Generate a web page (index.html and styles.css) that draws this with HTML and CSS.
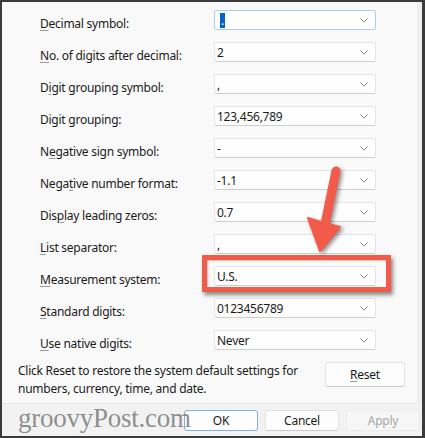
FILE: index.html
```html
<!DOCTYPE html>
<html>
<head>
<meta charset="utf-8">
<link rel="stylesheet" href="styles.css">
</head>
<body>
<div class="window">
  <div class="main">
    <div class="form">
      <label><u>D</u>ecimal symbol:</label>
      <div class="combo focus"><span class="sel">.</span><svg class="chev" viewBox="0 0 8 5"><polyline points="0.5,0.5 4,4 7.5,0.5"/></svg></div>
      <label><u>N</u>o. of digits after decimal:</label>
      <div class="combo"><span>2</span><svg class="chev" viewBox="0 0 8 5"><polyline points="0.5,0.5 4,4 7.5,0.5"/></svg></div>
      <label>D<u>i</u>git grouping symbol:</label>
      <div class="combo"><span>,</span><svg class="chev" viewBox="0 0 8 5"><polyline points="0.5,0.5 4,4 7.5,0.5"/></svg></div>
      <label>Digit grouping:</label>
      <div class="combo"><span>123,456,789</span><svg class="chev" viewBox="0 0 8 5"><polyline points="0.5,0.5 4,4 7.5,0.5"/></svg></div>
      <label>N<u>e</u>gative sign symbol:</label>
      <div class="combo"><span>-</span><svg class="chev" viewBox="0 0 8 5"><polyline points="0.5,0.5 4,4 7.5,0.5"/></svg></div>
      <label>Nega<u>t</u>ive number format:</label>
      <div class="combo"><span>-1.1</span><svg class="chev" viewBox="0 0 8 5"><polyline points="0.5,0.5 4,4 7.5,0.5"/></svg></div>
      <label>Dis<u>p</u>lay leading zeros:</label>
      <div class="combo"><span>0.7</span><svg class="chev" viewBox="0 0 8 5"><polyline points="0.5,0.5 4,4 7.5,0.5"/></svg></div>
      <label><u>L</u>ist separator:</label>
      <div class="combo"><span>,</span><svg class="chev" viewBox="0 0 8 5"><polyline points="0.5,0.5 4,4 7.5,0.5"/></svg></div>
      <label><u>M</u>easurement system:</label>
      <div class="combo"><span>U.S.</span><svg class="chev" viewBox="0 0 8 5"><polyline points="0.5,0.5 4,4 7.5,0.5"/></svg></div>
      <label><u>S</u>tandard digits:</label>
      <div class="combo"><span>0123456789</span><svg class="chev" viewBox="0 0 8 5"><polyline points="0.5,0.5 4,4 7.5,0.5"/></svg></div>
      <label><u>U</u>se native digits:</label>
      <div class="combo"><span>Never</span><svg class="chev" viewBox="0 0 8 5"><polyline points="0.5,0.5 4,4 7.5,0.5"/></svg></div>
    </div>
    <div class="reset-row">
      <p>Click Reset to restore the system default settings for numbers, currency, time, and date.</p>
      <button class="btn reset"><u>R</u>eset</button>
    </div>
  </div>
  <div class="footer">
    <button class="btn ok">OK</button>
    <button class="btn">Cancel</button>
    <button class="btn disabled">Apply</button>
  </div>
  <div class="watermark">groovyPost.com</div>
  <div class="highlight"></div>
  <svg class="arrow" viewBox="0 0 425 438">
    <line x1="336" y1="171" x2="325" y2="224"/>
    <polygon points="308,218 324,223 340,227 320,251"/>
  </svg>
</div>
</body>
</html>
```
FILE: styles.css
```css
* { box-sizing: border-box; }
html, body { margin: 0; padding: 0; }
body {
  width: 425px;
  height: 438px;
  overflow: hidden;
  font-family: "Noto Sans", "Open Sans", sans-serif;
  font-size: 12px;
  letter-spacing: -0.25px;
  color: #1b1b1b;
}
.window {
  position: relative;
  width: 425px;
  height: 438px;
  border: 2px solid #3b3b3b;
  border-right-width: 3px;
  display: flex;
  flex-direction: column;
  background: #f9f9f9;
}
.main {
  flex: 1;
  border-right: 5px solid #eeeeee;
  display: flex;
  flex-direction: column;
}
.form {
  display: grid;
  grid-template-columns: 174px 162px;
  grid-auto-rows: 20px;
  row-gap: 12px;
  padding: 8px 0 0 38px;
}
label {
  display: flex;
  align-items: center;
  padding-top: 6px;
  white-space: nowrap;
}
u {
  text-decoration-color: #9a9a9a;
  text-underline-offset: 2px;
}
.combo {
  display: flex;
  align-items: center;
  justify-content: space-between;
  background: #fefefe;
  border: 1px solid #e6e6e6;
  border-bottom-color: #cfcfcf;
  border-radius: 2px;
  padding: 2px 7px 0 2px;
  line-height: 16px;
  white-space: nowrap;
}
.combo .chev { margin-top: -2px; }
.combo.focus {
  border-color: #a9cff0;
  background: #ffffff;
}
.sel {
  display: inline-block;
  background: #0063d2;
  color: #fff;
  padding: 0 1px;
  letter-spacing: 0;
  height: 15px;
  line-height: 15px;
  margin-left: 3px;
  margin-top: -2px;
}
.chev {
  width: 8px;
  height: 5px;
  fill: none;
  stroke: #8a8a8a;
  stroke-width: 1;
}
.reset-row {
  display: flex;
  align-items: flex-start;
  justify-content: space-between;
  padding: 12px 12px 0 16px;
}
.reset-row p {
  margin: 0;
  width: 300px;
  line-height: 18px;
}
.btn {
  font-family: inherit;
  font-size: 12px;
  letter-spacing: -0.25px;
  color: #1b1b1b;
  background: #fdfdfd;
  border: 1px solid #e3e3e3;
  border-bottom-color: #cccccc;
  border-radius: 3px;
  height: 21px;
  width: 74px;
  padding: 0;
}
.btn.reset {
  width: 80px;
  height: 25px;
}
.footer {
  height: 33px;
  background: #f2f2f2;
  border-top: 1px solid #e8e8e8;
  display: flex;
  justify-content: flex-end;
  gap: 7px;
  padding: 6px 2px 0 0;
}
.btn.ok {
  border-color: #7fb2e0;
}
.btn.disabled {
  background: #f6f6f6;
  border-color: #ececec;
  color: #a6a6a6;
}
.watermark {
  position: absolute;
  left: 16px;
  top: 401px;
  font-family: "Liberation Serif", serif;
  font-size: 27px;
  line-height: 30px;
  color: rgba(115, 115, 115, 0.8);
  pointer-events: none;
}
.highlight {
  position: absolute;
  left: 200px;
  top: 253px;
  width: 189px;
  height: 37px;
  border: 5px solid #f25a4a;
  box-shadow: 2px 3px 4px rgba(0, 0, 0, 0.45), inset 1px 1px 2px rgba(0, 0, 0, 0.25);
}
.arrow {
  position: absolute;
  left: -2px;
  top: -2px;
  width: 425px;
  height: 438px;
  pointer-events: none;
  filter: drop-shadow(2px 2px 2px rgba(0, 0, 0, 0.45));
}
.arrow line {
  stroke: #f25a4a;
  stroke-width: 9;
  stroke-linecap: round;
}
.arrow polygon {
  fill: #f25a4a;
  stroke: #f25a4a;
  stroke-width: 2;
  stroke-linejoin: round;
}
```
